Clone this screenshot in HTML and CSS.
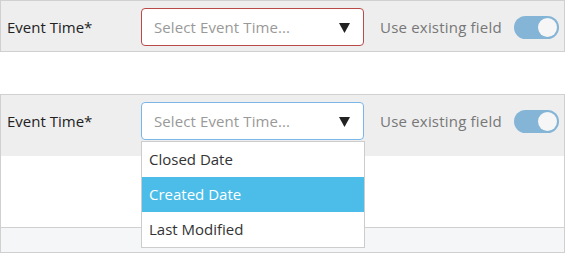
FILE: index.html
```html
<!DOCTYPE html>
<html lang="en">
<head>
    <meta charset="UTF-8">
    <title>Event Time field</title>
    <link rel="stylesheet" href="styles.css">
</head>
<body>
    <!-- invalid state -->
    <div class="field-row">
        <label class="field-label">Event Time*</label>
        <div class="select invalid">
            <span class="placeholder">Select Event Time...</span>
            <svg class="caret" width="11" height="10" viewBox="0 0 11 10"><path d="M0 0H11L5.5 10Z" fill="#222"/></svg>
        </div>
        <span class="existing-label">Use existing field</span>
        <span class="toggle"><span class="knob"></span></span>
    </div>

    <!-- open dropdown state -->
    <div class="panel">
        <div class="field-row open-row">
            <label class="field-label">Event Time*</label>
            <div class="select focused">
                <span class="placeholder">Select Event Time...</span>
                <svg class="caret" width="11" height="10" viewBox="0 0 11 10"><path d="M0 0H11L5.5 10Z" fill="#222"/></svg>
                <ul class="dropdown">
                    <li>Closed Date</li>
                    <li class="active">Created Date</li>
                    <li>Last Modified</li>
                </ul>
            </div>
            <span class="existing-label">Use existing field</span>
            <span class="toggle"><span class="knob"></span></span>
        </div>
        <div class="panel-body"></div>
        <div class="panel-footer"></div>
    </div>
</body>
</html>
```

FILE: styles.css
```css
* {
    margin: 0;
    padding: 0;
    box-sizing: border-box;
}

body {
    font-family: "Open Sans", "Noto Sans", sans-serif;
    font-size: 15px;
    color: #222;
    background: #fff;
    width: 565px;
}

/* form row */
.field-row {
    display: flex;
    align-items: center;
    background: #eee;
    border: 1px solid #d0d0d0;
    padding: 7px 0 5px 6px;
    height: 52px;
}

.field-label {
    width: 134px;
    flex: none;
}

.select {
    position: relative;
    display: flex;
    align-items: center;
    justify-content: space-between;
    width: 223px;
    height: 38px;
    padding: 0 13px 0 12px;
    background: #fff;
    border: 1px solid #ccc;
    border-radius: 4px;
}

.select.invalid {
    border-color: #b94a48;
}

.select.focused {
    border-color: #7bb6e8;
}

.placeholder {
    color: #999;
    letter-spacing: 0.1px;
}

.caret {
    margin-top: 1px;
}

.existing-label {
    margin-left: 16px;
    color: #777;
    letter-spacing: 0.2px;
}

.toggle {
    position: relative;
    width: 45px;
    height: 23px;
    margin-left: 12px;
    border-radius: 12px;
    background: #84b4d6;
}

.toggle .knob {
    position: absolute;
    right: 2px;
    top: 2px;
    width: 19px;
    height: 19px;
    border-radius: 50%;
    background: #f6f6f6;
}

/* panel with open dropdown */
.panel {
    margin-top: 42px;
    border: 1px solid #d0d0d0;
}

.open-row {
    border: none;
    height: 61px;
    padding: 7px 0 16px 6px;
}

.dropdown {
    position: absolute;
    left: -1px;
    top: 38px;
    width: 224px;
    list-style: none;
    background: #fff;
    border: 1px solid #ccc;
    z-index: 2;
}

.dropdown li {
    height: 35px;
    line-height: 35px;
    padding: 0 7px;
    color: #333;
}

.dropdown li.active {
    background: #4bbde8;
    color: #fff;
}

.panel-body {
    height: 71px;
    background: #fff;
}

.panel-footer {
    height: 25px;
    border-top: 1px solid #d0d0d0;
    background: #f5f6f8;
}
```
